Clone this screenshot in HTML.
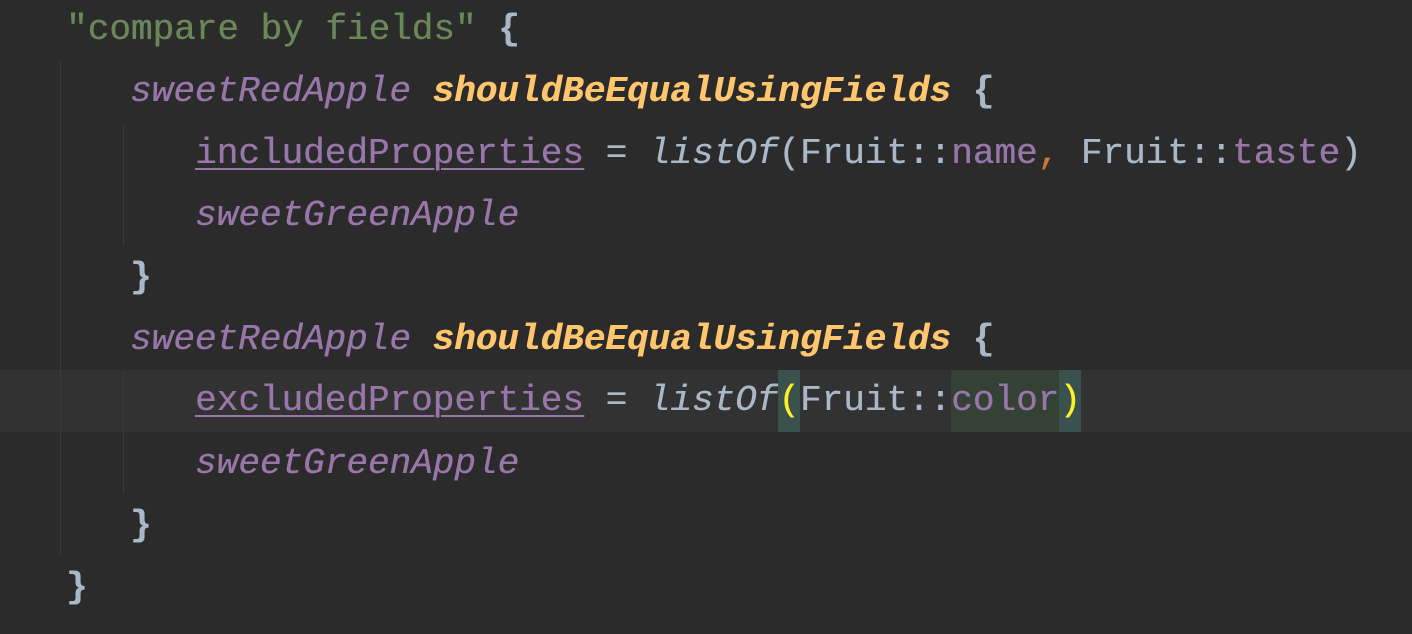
<!DOCTYPE html>
<html><head><style>
body{margin:0;width:1412px;height:634px;background:#2b2b2b;overflow:hidden;position:relative;font-family:"Liberation Mono",monospace;font-size:36px;color:#a9b7c6}
.l{position:absolute;height:62px;line-height:62px;white-space:pre;text-shadow:0.4px 0 0 currentColor}
.s{color:#6a8759}.p{color:#9876aa}.i{font-style:italic}.y{color:#ffc66d;font-style:italic;font-weight:bold}
.u{text-decoration:underline;text-decoration-thickness:2px;text-underline-offset:5px}
.o{color:#cc7832}
.b{font-weight:bold}
.g{position:absolute;width:1px;background:#3a3a3a}
.hl{position:absolute;left:0;top:370px;width:1412px;height:62px;background:#323232}
.bm{background:#3b514d;color:#ffef28;display:inline-block;height:62px;vertical-align:top}
.cm{background:#344134;display:inline-block;height:62px;vertical-align:top}
</style></head><body>
<div class="hl"></div>
<div class="g" style="left:60px;top:60px;height:496px"></div>
<div class="g" style="left:123px;top:124px;height:122px"></div>
<div class="g" style="left:123px;top:372px;height:122px"></div>
<div class="l" style="top:-1px;left:66px"><span class="s">"compare by fields"</span> <span class="b">{</span></div>
<div class="l" style="top:61px;left:130px"><span class="p i">sweetRedApple</span> <span class="y">shouldBeEqualUsingFields</span> <span class="b">{</span></div>
<div class="l" style="top:123px;left:195px"><span class="p u">includedProperties</span> = <span class="i">listOf</span>(Fruit::<span class="p">name</span><span class="o">,</span> Fruit::<span class="p">taste</span>)</div>
<div class="l" style="top:185px;left:195px"><span class="p i">sweetGreenApple</span></div>
<div class="l" style="top:247px;left:130px"><span class="b">}</span></div>
<div class="l" style="top:309px;left:130px"><span class="p i">sweetRedApple</span> <span class="y">shouldBeEqualUsingFields</span> <span class="b">{</span></div>
<div class="l" style="top:370px;left:195px"><span class="p u">excludedProperties</span> = <span class="i">listOf</span><span class="bm">(</span>Fruit::<span class="p cm">color</span><span class="bm">)</span></div>
<div class="l" style="top:433px;left:195px"><span class="p i">sweetGreenApple</span></div>
<div class="l" style="top:495px;left:130px"><span class="b">}</span></div>
<div class="l" style="top:557px;left:66px"><span class="b">}</span></div>
</body></html>
